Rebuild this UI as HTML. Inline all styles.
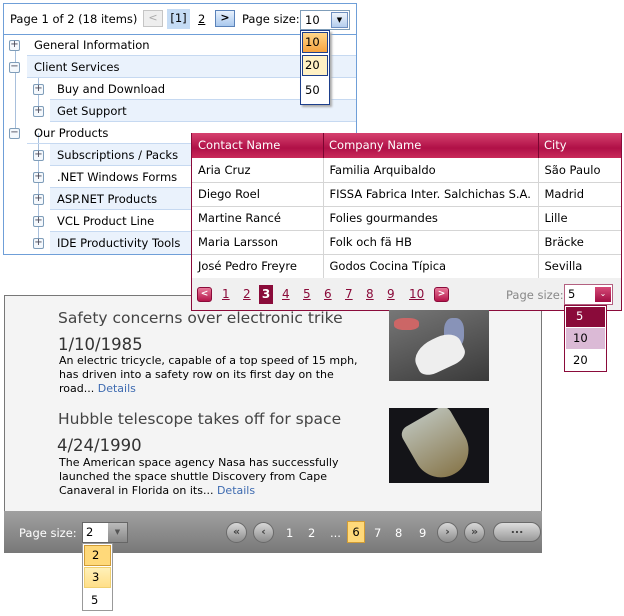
<!DOCTYPE html>
<html><head><meta charset="utf-8"><style>
*{box-sizing:border-box;margin:0;padding:0}
body{width:624px;height:616px;background:#fff;position:relative;overflow:hidden;font-family:"DejaVu Sans",Verdana,sans-serif;font-size:11px;color:#000}
.a{position:absolute}
.row{position:absolute;height:22px;line-height:23px;border-bottom:1px solid #c6d9f1;font-size:11.5px;white-space:nowrap}
.alt{background:#eaf2fc}
.pm{position:absolute;width:11px;height:11px;border:1px solid #7f9db9;background:#f4f8fc;border-radius:2px;font-size:10px;line-height:8px;text-align:center;color:#445;}
.g td{border-right:1px solid #d5d5d5;border-bottom:1px solid #d5d5d5;padding-left:6px;height:24px;font-size:11.5px;white-space:nowrap}
.pl{position:absolute;top:287px;color:#8a0b3a;text-decoration:underline;font-size:12px}
.rb{position:absolute;width:21px;height:21px;border-radius:50%;background:linear-gradient(#d8d8d8,#8c8c8c);border:1px solid #6a6a6a;color:#444;font-size:11px;line-height:18px;text-align:center;font-weight:bold}
.fn{position:absolute;top:526px;color:#fff;font-size:11.5px}
.p{white-space:nowrap;font-size:11px;line-height:14px}
</style></head><body>
<div class="a" style="left:3px;top:3px;width:354px;height:252px;border:1px solid #6f9fd8"></div>
<div class="a" style="left:10px;top:12px;font-size:11.5px">Page 1 of 2 (18 items)</div>
<div class="a" style="left:143px;top:10px;width:20px;height:17px;border:1px solid #c5c5c5;background:#eee;color:#aaa;text-align:center;line-height:14px">&lt;</div>
<div class="a" style="left:167px;top:9px;width:23px;height:20px;background:#c5dcf5;text-align:center;line-height:19px;font-size:11.5px">[1]</div>
<div class="a" style="left:198px;top:12px;text-decoration:underline;font-size:11.5px">2</div>
<div class="a" style="left:215px;top:10px;width:20px;height:17px;border:1px solid #5a82b9;background:linear-gradient(#e8f1fc,#a9c8ee);text-align:center;line-height:14px;font-weight:bold">&gt;</div>
<div class="a" style="left:242px;top:12px;font-size:11.5px">Page size:</div>
<div class="a" style="left:300px;top:10px;width:50px;height:20px;border:1px solid #7f9db9;background:#fff;padding-left:4px;line-height:18px;font-size:11.5px">10</div>
<div class="a" style="left:331px;top:12px;width:17px;height:16px;border:1px solid #6f8fc0;background:linear-gradient(#eef4fc,#b5cdee);font-size:7px;text-align:center;line-height:14px">▼</div>
<div class="a" style="left:4px;top:34px;width:352px;height:1px;background:#6f9fd8"></div>
<div class="a" style="left:15px;top:45px;width:1px;height:88px;background:#a9c0dc"></div>
<div class="a" style="left:38px;top:133px;width:1px;height:110px;background:#a9c0dc"></div>
<div class="a" style="left:38px;top:78px;width:1px;height:33px;background:#a9c0dc"></div>
<div class="row" style="left:27px;top:34px;width:329px;padding-left:7px">General Information</div>
<div class="row alt" style="left:27px;top:56px;width:329px;padding-left:7px">Client Services</div>
<div class="row" style="left:50px;top:78px;width:306px;padding-left:7px">Buy and Download</div>
<div class="row alt" style="left:50px;top:100px;width:306px;padding-left:7px">Get Support</div>
<div class="row" style="left:27px;top:122px;width:329px;padding-left:7px">Our Products</div>
<div class="row alt" style="left:50px;top:144px;width:306px;padding-left:7px">Subscriptions / Packs</div>
<div class="row" style="left:50px;top:166px;width:306px;padding-left:7px">.NET Windows Forms</div>
<div class="row alt" style="left:50px;top:188px;width:306px;padding-left:7px">ASP.NET Products</div>
<div class="row" style="left:50px;top:210px;width:306px;padding-left:7px">VCL Product Line</div>
<div class="row alt" style="left:50px;top:232px;width:306px;padding-left:7px;border-bottom:none">IDE Productivity Tools</div>
<div class="pm" style="left:9px;top:40px">+</div>
<div class="pm" style="left:9px;top:62px">−</div>
<div class="pm" style="left:33px;top:84px">+</div>
<div class="pm" style="left:33px;top:106px">+</div>
<div class="pm" style="left:9px;top:128px">−</div>
<div class="pm" style="left:33px;top:150px">+</div>
<div class="pm" style="left:33px;top:172px">+</div>
<div class="pm" style="left:33px;top:194px">+</div>
<div class="pm" style="left:33px;top:216px">+</div>
<div class="pm" style="left:33px;top:238px">+</div>
<div class="a" style="left:300px;top:30px;width:30px;height:75px;border:1px solid #1d3f8c;background:#fff;box-shadow:2px 2px 2px #aaa"></div>
<div class="a" style="left:302px;top:32px;width:26px;height:21px;border:1px solid #1d3f8c;background:linear-gradient(#ffd68a,#f7a33f);padding-left:2px;line-height:19px;font-size:11.5px">10</div>
<div class="a" style="left:302px;top:55px;width:26px;height:21px;border:1px solid #1d3f8c;background:#fff1c4;padding-left:2px;line-height:19px;font-size:11.5px">20</div>
<div class="a" style="left:305px;top:83px;font-size:11.5px">50</div>
<div class="a" style="left:191px;top:133px;width:431px;height:178px;border:1px solid #8a0b3a;border-top:none;background:#fff">
<div style="height:25px;background:linear-gradient(#d6426f,#b01047 60%,#c92a5a);color:#fff;font-size:11.5px;position:relative">
<span class="a" style="left:6px;top:5px">Contact Name</span><span class="a" style="left:137px;top:5px">Company Name</span><span class="a" style="left:352px;top:5px">City</span>
<div class="a" style="left:131px;top:0;width:1px;height:25px;background:#7a0530"></div><div class="a" style="left:346px;top:0;width:1px;height:25px;background:#7a0530"></div>
</div>
<table class="g" style="border-collapse:collapse;width:429px"><colgroup><col style="width:131px"><col style="width:215px"><col></colgroup>
<tr><td>Aria Cruz</td><td>Familia Arquibaldo</td><td style="border-right:none">São Paulo</td></tr>
<tr><td>Diego Roel</td><td>FISSA Fabrica Inter. Salchichas S.A.</td><td style="border-right:none">Madrid</td></tr>
<tr><td>Martine Rancé</td><td>Folies gourmandes</td><td style="border-right:none">Lille</td></tr>
<tr><td>Maria Larsson</td><td>Folk och fä HB</td><td style="border-right:none">Bräcke</td></tr>
<tr><td>José Pedro Freyre</td><td>Godos Cocina Típica</td><td style="border-right:none">Sevilla</td></tr>
</table>
<div class="a" style="left:0;top:145px;width:429px;height:32px;background:#f0f0f0"></div>
</div>
<div class="a" style="left:197px;top:287px;width:15px;height:15px;border-radius:3px;background:linear-gradient(#e8799a,#b5154a);border:1px solid #8a0b3a;color:#fff;font-size:9px;text-align:center;line-height:12px;font-weight:bold">&lt;</div>
<span class="pl" style="left:222px">1</span><span class="pl" style="left:243px">2</span>
<div class="a" style="left:259px;top:285px;width:14px;height:19px;background:#8a0b3a;color:#fff;font-weight:bold;text-align:center;line-height:18px;font-size:12px">3</div>
<span class="pl" style="left:282px">4</span><span class="pl" style="left:303px">5</span><span class="pl" style="left:324px">6</span><span class="pl" style="left:345px">7</span><span class="pl" style="left:366px">8</span><span class="pl" style="left:387px">9</span><span class="pl" style="left:409px">10</span>
<div class="a" style="left:434px;top:287px;width:15px;height:15px;border-radius:3px;background:linear-gradient(#e8799a,#b5154a);border:1px solid #8a0b3a;color:#fff;font-size:9px;text-align:center;line-height:12px;font-weight:bold">&gt;</div>
<div class="a" style="left:506px;top:288px;color:#888;font-size:11.5px">Page size:</div>
<div class="a" style="left:564px;top:284px;width:49px;height:21px;border:1px solid #b36080;background:#fff;padding-left:3px;line-height:19px;font-size:11.5px">5</div>
<div class="a" style="left:595px;top:287px;width:16px;height:15px;background:linear-gradient(#d64a78,#a00d42);color:#fff;font-size:8px;text-align:center;line-height:14px">⌄</div>
<div class="a" style="left:564px;top:305px;width:43px;height:67px;border:1px solid #8a0b3a;background:#fff"></div>
<div class="a" style="left:566px;top:307px;width:39px;height:20px;background:#8a0b3a;color:#fff;padding-left:10px;line-height:19px;font-size:11.5px">5</div>
<div class="a" style="left:566px;top:328px;width:39px;height:21px;background:#dbbad6;padding-left:7px;line-height:21px;font-size:11.5px">10</div>
<div class="a" style="left:573px;top:353px;font-size:11.5px">20</div>
<div class="a" style="left:4px;top:295px;width:538px;height:258px;border:1px solid #777;background:#f4f4f4;z-index:-1"></div>
<div class="a" style="left:58px;top:309px;font-size:15.5px;color:#444">Safety concerns over electronic trike</div>
<div class="a" style="left:58px;top:335px;font-size:16.5px;color:#333">1/10/1985</div>
<div class="a p" style="left:59px;top:354px">An electric tricycle, capable of a top speed of 15 mph,<br>has driven into a safety row on its first day on the<br>road... <span style="color:#3d6ab0">Details</span></div>
<div class="a" style="left:389px;top:310px;width:100px;height:71px;background:linear-gradient(160deg,#777,#3a3a3a);overflow:hidden"><div class="a" style="left:5px;top:8px;width:25px;height:12px;background:#c66;border-radius:40%"></div><div class="a" style="left:55px;top:8px;width:20px;height:30px;background:#8893b8;border-radius:40%"></div><div class="a" style="left:25px;top:28px;width:50px;height:32px;background:#eee;border-radius:50% 40% 30% 30%;transform:rotate(-25deg)"></div></div>
<div class="a" style="left:58px;top:410px;font-size:15.5px;color:#444">Hubble telescope takes off for space</div>
<div class="a" style="left:57px;top:436px;font-size:16.5px;color:#333">4/24/1990</div>
<div class="a p" style="left:59px;top:456px">The American space agency Nasa has successfully<br>launched the space shuttle Discovery from Cape<br>Canaveral in Florida on its... <span style="color:#3d6ab0">Details</span></div>
<div class="a" style="left:389px;top:408px;width:100px;height:75px;background:#141418;overflow:hidden"><div class="a" style="left:22px;top:5px;width:55px;height:65px;background:linear-gradient(#b8bcb0,#8a7a50);border-radius:10px 10px 30px 30px;transform:rotate(-30deg)"></div></div>
<div class="a" style="left:4px;top:511px;width:538px;height:42px;background:linear-gradient(#a0a0a0,#787878)"></div>
<div class="a" style="left:19px;top:526px;color:#fff;font-size:11.5px">Page size:</div>
<div class="a" style="left:82px;top:522px;width:46px;height:21px;border:1px solid #666;background:#fff;padding-left:3px;line-height:19px;font-size:11.5px">2</div>
<div class="a" style="left:108px;top:523px;width:19px;height:19px;background:linear-gradient(#bbb,#888);color:#555;font-size:7px;text-align:center;line-height:18px">▼</div>
<div class="rb" style="left:226px;top:522px">«</div>
<div class="rb" style="left:253px;top:522px">‹</div>
<span class="fn" style="left:286px">1</span><span class="fn" style="left:308px">2</span><span class="fn" style="left:330px">...</span>
<div class="a" style="left:347px;top:521px;width:18px;height:22px;background:#ffd97a;border:1px solid #d19c35;text-align:center;line-height:20px;font-size:11.5px">6</div>
<span class="fn" style="left:374px">7</span><span class="fn" style="left:395px">8</span><span class="fn" style="left:419px">9</span>
<div class="rb" style="left:437px;top:522px">›</div>
<div class="rb" style="left:464px;top:522px">»</div>
<div class="a" style="left:493px;top:522px;width:48px;height:20px;border-radius:10px;background:linear-gradient(#ddd,#999);border:1px solid #6a6a6a;color:#444;text-align:center;line-height:14px;font-weight:bold">...</div>
<div class="a" style="left:82px;top:543px;width:31px;height:68px;border:1px solid #999;background:#fff"></div>
<div class="a" style="left:84px;top:545px;width:27px;height:21px;background:#ffd97a;border:1px solid #d19c35;padding-left:7px;line-height:19px;font-size:11.5px">2</div>
<div class="a" style="left:84px;top:567px;width:27px;height:21px;background:linear-gradient(#fff0b8,#ffdf88);border:1px solid #f0d070;padding-left:7px;line-height:19px;font-size:11.5px">3</div>
<div class="a" style="left:91px;top:593px;font-size:11.5px">5</div>
</body></html>
